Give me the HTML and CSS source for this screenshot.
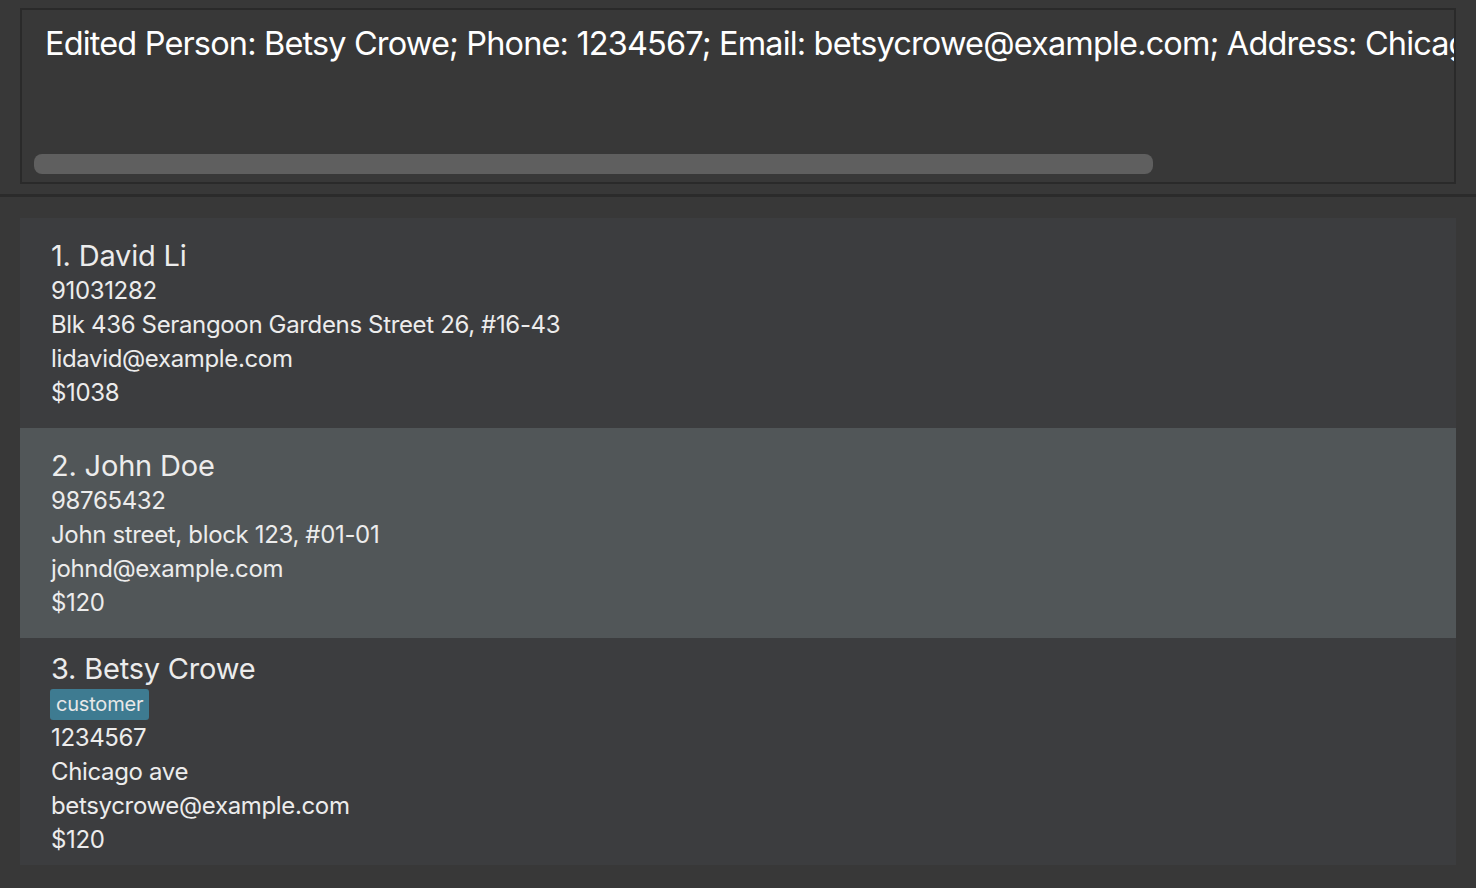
FILE: index.html
```html
<!DOCTYPE html>
<html>
<head>
<meta charset="utf-8">
<link rel="stylesheet" href="styles.css">
</head>
<body>
<div class="app">
  <section class="result">
    <div class="result-box">
      <div class="result-text">Edited Person: Betsy Crowe; Phone: 1234567; Email: betsycrowe@example.com; Address: Chicago ave; Tags: [customer]</div>
      <div class="hscroll"><div class="thumb"></div></div>
    </div>
  </section>
  <div class="divider"></div>
  <section class="list">
    <div class="card">
      <div class="name">1. David Li</div>
      <div class="line">91031282</div>
      <div class="line">Blk 436 Serangoon Gardens Street 26, #16-43</div>
      <div class="line">lidavid@example.com</div>
      <div class="line">$1038</div>
    </div>
    <div class="card selected">
      <div class="name">2. John Doe</div>
      <div class="line">98765432</div>
      <div class="line">John street, block 123, #01-01</div>
      <div class="line">johnd@example.com</div>
      <div class="line">$120</div>
    </div>
    <div class="card tall">
      <div class="name">3. Betsy Crowe</div>
      <div class="tags"><span class="tag">customer</span></div>
      <div class="line">1234567</div>
      <div class="line">Chicago ave</div>
      <div class="line">betsycrowe@example.com</div>
      <div class="line">$120</div>
    </div>
  </section>
</div>
</body>
</html>
```
FILE: styles.css
```css
html, body {
  margin: 0;
  padding: 0;
  background: #383838;
  width: 1476px;
  height: 888px;
  overflow: hidden;
  font-family: Inter, Roboto, "Noto Sans", sans-serif;
}
.app {
  display: flex;
  flex-direction: column;
}
.result {
  padding: 8px 20px 10px 20px;
}
.result-box {
  box-sizing: border-box;
  height: 176px;
  border: 2px solid #2a2a2a;
  background: #383838;
  overflow: hidden;
  display: flex;
  flex-direction: column;
  justify-content: space-between;
  padding: 0 0 8px 12px;
}
.result-text {
  color: #ffffff;
  font-size: 32.5px;
  letter-spacing: -0.85px;
  white-space: nowrap;
  padding: 14px 0 0 11px;
  line-height: 40px;
}
.hscroll {
  height: 20px;
}
.thumb {
  width: 1119px;
  height: 20px;
  border-radius: 8px;
  background: #5f5f5f;
}
.divider {
  height: 3px;
  background: #2b2b2b;
  margin-bottom: 21px;
}
.list {
  margin: 0 20px;
  display: flex;
  flex-direction: column;
}
.card {
  height: 210px;
  box-sizing: border-box;
  background: #3c3d3f;
  padding: 20px 31px 0 31px;
  color: #ececec;
}
.card.selected {
  background: #515658;
}
.card.tall {
  height: 227px;
  padding-top: 13px;
}
.name {
  font-size: 29px;
  letter-spacing: -0.2px;
  line-height: 36px;
}
.line {
  font-size: 24px;
  letter-spacing: -0.35px;
  line-height: 34px;
}
.tags {
  display: flex;
  height: 34px;
  align-items: center;
}
.tag {
  background: #3e7b91;
  color: #e8e8e8;
  font-size: 20px;
  letter-spacing: -0.2px;
  line-height: 31px;
  padding: 0 6px;
  border-radius: 3px;
  margin-left: -1px;
}
```
